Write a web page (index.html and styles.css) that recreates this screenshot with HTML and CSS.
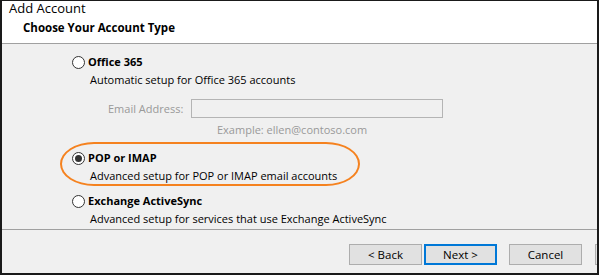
FILE: index.html
```html
<!DOCTYPE html>
<html lang="en">
<head>
    <meta charset="UTF-8">
    <title>Add Account</title>
    <link rel="stylesheet" href="styles.css">
</head>
<body>
    <div class="dialog">
        <div class="header">
            <div class="title">Add Account</div>
            <h1>Choose Your Account Type</h1>
        </div>

        <div class="content">
            <div class="option">
                <div class="option-row">
                    <span class="radio"></span>
                    <span class="option-label">Office 365</span>
                </div>
                <div class="option-desc">Automatic setup for Office 365 accounts</div>
            </div>

            <div class="email-row">
                <span class="email-label">Email Address:</span>
                <span class="email-input"></span>
            </div>
            <div class="email-example">Example: ellen@contoso.com</div>

            <div class="option option-pop">
                <div class="highlight"></div>
                <div class="option-row">
                    <span class="radio checked"></span>
                    <span class="option-label">POP or IMAP</span>
                </div>
                <div class="option-desc">Advanced setup for POP or IMAP email accounts</div>
            </div>

            <div class="option option-eas">
                <div class="option-row">
                    <span class="radio"></span>
                    <span class="option-label">Exchange ActiveSync</span>
                </div>
                <div class="option-desc">Advanced setup for services that use Exchange ActiveSync</div>
            </div>
        </div>

        <div class="footer">
            <button class="btn">&lt; Back</button>
            <button class="btn btn-default">Next &gt;</button>
            <button class="btn btn-cancel">Cancel</button>
            <button class="btn btn-help" aria-label="Help"></button>
        </div>
    </div>
</body>
</html>
```

FILE: styles.css
```css
* {
    margin: 0;
    padding: 0;
    box-sizing: border-box;
}

body {
    font-family: "Open Sans", "Noto Sans", sans-serif;
    font-size: 11px;
    color: #000;
    width: 600px;
    height: 275px;
    overflow: hidden;
    background: #fff;
}

.dialog {
    width: 599px;
    height: 275px;
    border: 1px solid #1a1a1a;
    border-left-width: 2px;
    border-right-width: 2px;
    border-bottom-width: 2px;
    display: flex;
    flex-direction: column;
    overflow: hidden;
}

.header {
    background: #fff;
    height: 43px;
    border-bottom: 1px solid #a0a0a0;
    padding-left: 7px;
}

.title {
    font-size: 13px;
    line-height: 14px;
}

h1 {
    font-size: 11.5px;
    font-weight: 700;
    line-height: 18px;
    margin-top: 4px;
    padding-left: 14px;
}

.content {
    background: #f0f0f0;
    height: 186px;
    border-bottom: 1px solid #a0a0a0;
    padding: 9px 0 0 70px;
}

.option {
    position: relative;
    line-height: 18px;
}

.option-row {
    display: flex;
    align-items: center;
    gap: 3px;
}

.option-label {
    font-weight: 700;
}

.option-desc {
    padding-left: 18px;
}

.radio {
    width: 13px;
    height: 13px;
    border: 1px solid #333;
    border-radius: 50%;
    background: #fff;
    display: flex;
    align-items: center;
    justify-content: center;
}

.radio.checked::after {
    content: "";
    width: 7px;
    height: 7px;
    border-radius: 50%;
    background: #333;
}

.email-row {
    display: flex;
    align-items: center;
    margin-top: 10px;
    padding-left: 36px;
    gap: 10px;
}

.email-label {
    color: #999;
    width: 73px;
    white-space: nowrap;
}

.email-input {
    width: 252px;
    height: 19px;
    border: 1px solid #b4b4b4;
    background: #f0f0f0;
}

.email-example {
    color: #999;
    line-height: 18px;
    margin-top: 3px;
    padding-left: 145px;
}

.option-pop {
    margin-top: 10px;
}

.option-eas {
    margin-top: 7px;
}

.highlight {
    position: absolute;
    left: -12px;
    top: -7px;
    width: 300px;
    height: 44px;
    border: 2px solid #f5821f;
    border-radius: 34px / 22px;
}

.footer {
    background: #f0f0f0;
    flex: 1;
    display: flex;
    align-items: flex-start;
    padding: 14px 0 0 347px;
    overflow: hidden;
}

.btn {
    flex: none;
    width: 73px;
    height: 21px;
    font-family: inherit;
    font-size: 11.5px;
    color: #000;
    background: #e1e1e1;
    border: 1px solid #adadad;
}

.btn-default {
    margin-left: 2px;
    border: 2px solid #0078d7;
}

.btn-cancel {
    margin-left: 12px;
}

.btn-help {
    margin-left: 13px;
}
```
